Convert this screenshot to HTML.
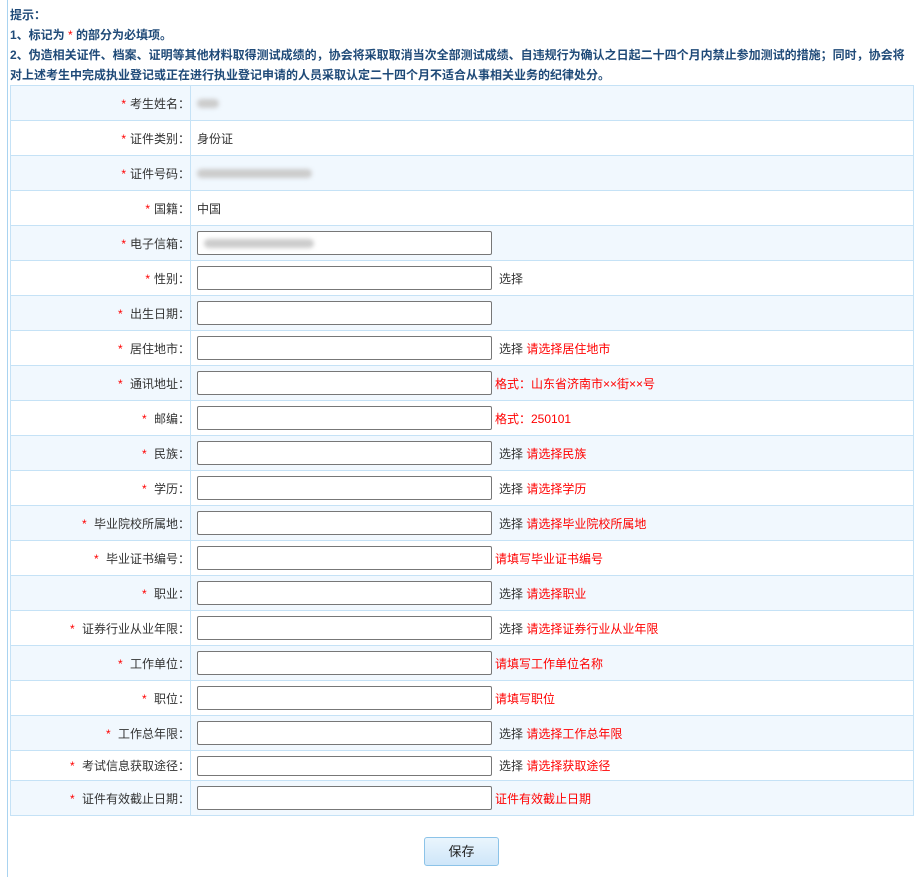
<!DOCTYPE html>
<html><head><meta charset="utf-8"><style>
body{margin:0;background:#fff;font-family:"Liberation Sans","Noto Sans CJK SC",sans-serif;font-size:12px;color:#333;width:915px;height:877px;overflow:hidden;position:relative}
.vl{position:absolute;left:7px;top:0;width:1px;height:877px;background:#a9d3f0}
.tip{position:absolute;left:10px;top:5px;width:905px;color:#1f4a78;font-weight:bold;line-height:20px;font-size:12px}
.tip .r{color:#f00;font-weight:normal}
table{position:absolute;left:10px;top:85px;width:904px;border-collapse:collapse}
td{border:1px solid #c5e2f6;height:34px;padding:0}
tr:nth-child(odd) td{background:#f1f8fe}
tr.s td{height:29px}
td.l{width:179px;text-align:right;padding-right:0;color:#333}
td.l i{color:#f00;font-style:normal;margin-right:4px}
td.v{padding-left:6px}
.in{display:inline-block;vertical-align:middle;width:293px;height:22px;border:1px solid #777;border-radius:2px;background:#fff}
.s .in{height:18px}
.h{margin-left:7px;vertical-align:middle}
.red{color:#f00}
.rr{color:#f00;margin-left:3px;vertical-align:middle}
.blur{display:inline-block;height:9px;background:#ccc;border-radius:5px;filter:blur(2px);vertical-align:middle}
.btn{position:absolute;left:424px;top:837px;width:73px;height:27px;border:1px solid #8cc3e8;border-radius:3px;background:linear-gradient(#eaf5fd,#cfe6f9);text-align:center;line-height:27px;font-size:13px;color:#222}
</style></head><body>
<div class="vl"></div>
<div class="tip">提示：<br>1、标记为 <span class="r">*</span> 的部分为必填项。<br>2、伪造相关证件、档案、证明等其他材料取得测试成绩的，协会将采取取消当次全部测试成绩、自违规行为确认之日起二十四个月内禁止参加测试的措施；同时，协会将对上述考生中完成执业登记或正在进行执业登记申请的人员采取认定二十四个月不适合从事相关业务的纪律处分。</div>
<table>
<tr><td class="l"><i>*</i>考生姓名：</td><td class="v"><span class="blur" style="width:22px"></span></td></tr>
<tr><td class="l"><i>*</i>证件类别：</td><td class="v">身份证</td></tr>
<tr><td class="l"><i>*</i>证件号码：</td><td class="v"><span class="blur" style="width:115px"></span></td></tr>
<tr><td class="l"><i>*</i>国籍：</td><td class="v">中国</td></tr>
<tr><td class="l"><i>*</i>电子信箱：</td><td class="v"><span class="in" style="position:relative"><span class="blur" style="position:absolute;left:6px;top:7px;width:110px"></span></span></td></tr>
<tr><td class="l"><i>*</i>性别：</td><td class="v"><span class="in"></span><span class="h">选择</span></td></tr>
<tr><td class="l"><i>*</i> 出生日期：</td><td class="v"><span class="in"></span></td></tr>
<tr><td class="l"><i>*</i> 居住地市：</td><td class="v"><span class="in"></span><span class="h">选择 <span class="red">请选择居住地市</span></span></td></tr>
<tr><td class="l"><i>*</i> 通讯地址：</td><td class="v"><span class="in"></span><span class="rr">格式：山东省济南市××街××号</span></td></tr>
<tr><td class="l"><i>*</i> 邮编：</td><td class="v"><span class="in"></span><span class="rr">格式：250101</span></td></tr>
<tr><td class="l"><i>*</i> 民族：</td><td class="v"><span class="in"></span><span class="h">选择 <span class="red">请选择民族</span></span></td></tr>
<tr><td class="l"><i>*</i> 学历：</td><td class="v"><span class="in"></span><span class="h">选择 <span class="red">请选择学历</span></span></td></tr>
<tr><td class="l"><i>*</i> 毕业院校所属地：</td><td class="v"><span class="in"></span><span class="h">选择 <span class="red">请选择毕业院校所属地</span></span></td></tr>
<tr><td class="l"><i>*</i> 毕业证书编号：</td><td class="v"><span class="in"></span><span class="rr">请填写毕业证书编号</span></td></tr>
<tr><td class="l"><i>*</i> 职业：</td><td class="v"><span class="in"></span><span class="h">选择 <span class="red">请选择职业</span></span></td></tr>
<tr><td class="l"><i>*</i> 证券行业从业年限：</td><td class="v"><span class="in"></span><span class="h">选择 <span class="red">请选择证券行业从业年限</span></span></td></tr>
<tr><td class="l"><i>*</i> 工作单位：</td><td class="v"><span class="in"></span><span class="rr">请填写工作单位名称</span></td></tr>
<tr><td class="l"><i>*</i> 职位：</td><td class="v"><span class="in"></span><span class="rr">请填写职位</span></td></tr>
<tr><td class="l"><i>*</i> 工作总年限：</td><td class="v"><span class="in"></span><span class="h">选择 <span class="red">请选择工作总年限</span></span></td></tr>
<tr class="s"><td class="l"><i>*</i> 考试信息获取途径：</td><td class="v"><span class="in"></span><span class="h">选择 <span class="red">请选择获取途径</span></span></td></tr>
<tr><td class="l"><i>*</i> 证件有效截止日期：</td><td class="v"><span class="in"></span><span class="rr">证件有效截止日期</span></td></tr>
</table>
<div class="btn">保存</div>
</body></html>
